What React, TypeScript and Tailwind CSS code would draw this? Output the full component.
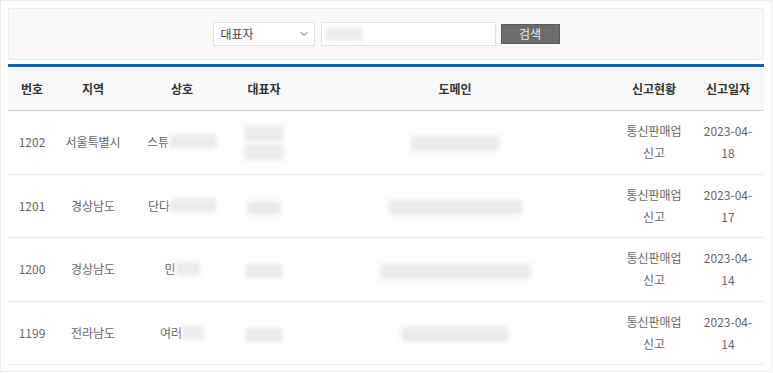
import { ChevronDown } from "lucide-react";

type Row = {
  no: string;
  region: string;
  name: string;
  nameBlur: number;
  ceoBlur: number;
  ceoTwoLine?: boolean;
  domainBlur: number;
  date: string;
};

const ROWS: Row[] = [
  { no: "1202", region: "서울특별시", name: "스튜", nameBlur: 48, ceoBlur: 40, ceoTwoLine: true, domainBlur: 90, date: "18" },
  { no: "1201", region: "경상남도", name: "단다", nameBlur: 46, ceoBlur: 34, domainBlur: 134, date: "17" },
  { no: "1200", region: "경상남도", name: "민", nameBlur: 24, ceoBlur: 36, domainBlur: 152, date: "14" },
  { no: "1199", region: "전라남도", name: "여러", nameBlur: 22, ceoBlur: 36, domainBlur: 108, date: "14" },
];

function Blur({ w, h = 14 }: { w: number; h?: number }) {
  return (
    <span
      className="inline-block align-middle bg-[#ebebeb] blur-[2.5px]"
      style={{ width: w, height: h }}
    />
  );
}

export default function App() {
  return (
    <div className="w-[773px] h-[373px] bg-white font-['Noto_Sans_CJK_KR','Noto_Sans',sans-serif]">
      <div className="h-[372px] w-[772px] border border-[#ececec] px-[7px] pt-[7px]">
        {/* Search */}
        <div className="h-[52px] border border-[#ebebeb] bg-[#f8f8f8] flex items-center justify-center gap-[6px]">
          <div className="w-[102px] h-[24px] bg-white border border-[#e2e2e2] flex items-center justify-between pl-[7px] pr-[4px] text-[12px] text-[#444]">
            <span>대표자</span>
            <ChevronDown className="w-3 h-3 text-[#555]" strokeWidth={2} />
          </div>
          <div className="w-[175px] h-[24px] bg-white border border-[#e2e2e2] flex items-center pl-[4px]">
            <Blur w={36} h={14} />
          </div>
          <button className="ml-[-1px] w-[59px] h-[20px] bg-[#6b6b6b] border border-[#5a5a5a] text-[#f0f0f0] text-[12px] leading-none flex items-center justify-center">
            검색
          </button>
        </div>

        {/* Table */}
        <table className="mt-[4px] w-full table-fixed border-collapse border-t-[3px] border-[#1a5fac] text-[12px]">
          <colgroup>
            <col className="w-[48px]" />
            <col className="w-[74px]" />
            <col className="w-[104px]" />
            <col className="w-[60px]" />
            <col />
            <col className="w-[76px]" />
            <col className="w-[72px]" />
          </colgroup>
          <thead>
            <tr className="h-[45px] bg-[#f8f8f8] border-b border-[#cfcfcf] text-[#333] font-bold">
              <th>번호</th>
              <th>지역</th>
              <th>상호</th>
              <th>대표자</th>
              <th>도메인</th>
              <th>신고현황</th>
              <th>신고일자</th>
            </tr>
          </thead>
          <tbody className="text-[#666] text-center">
            {ROWS.map((r) => (
              <tr key={r.no} className="h-[63.6px] border-b border-[#ebebeb]">
                <td>{r.no}</td>
                <td>{r.region}</td>
                <td>
                  <span className="inline-flex items-center">
                    {r.name}
                    <Blur w={r.nameBlur} />
                  </span>
                </td>
                <td>
                  {r.ceoTwoLine ? (
                    <span className="inline-flex flex-col gap-[3px]">
                      <Blur w={r.ceoBlur} h={16} />
                      <Blur w={r.ceoBlur} h={16} />
                    </span>
                  ) : (
                    <Blur w={r.ceoBlur} />
                  )}
                </td>
                <td>
                  <Blur w={r.domainBlur} h={15} />
                </td>
                <td className="px-[8px] leading-[22px]">통신판매업 신고</td>
                <td className="px-[9px] leading-[22px]">2023-04-{r.date}</td>
              </tr>
            ))}
          </tbody>
        </table>
      </div>
    </div>
  );
}
